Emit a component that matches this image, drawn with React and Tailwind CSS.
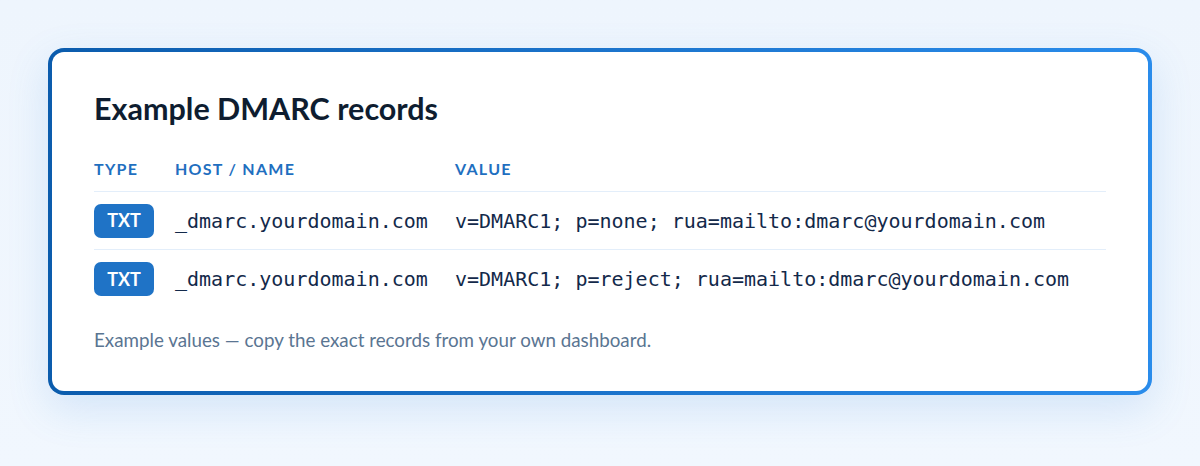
const records = [
  { type: "TXT", host: "_dmarc.yourdomain.com", value: "v=DMARC1; p=none; rua=mailto:dmarc@yourdomain.com" },
  { type: "TXT", host: "_dmarc.yourdomain.com", value: "v=DMARC1; p=reject; rua=mailto:dmarc@yourdomain.com" },
];

export default function App() {
  return (
    <div className="min-h-[466px] w-[1200px] bg-gradient-to-b from-[#eef5fd] to-[#f1f7fe] pt-[48px] px-[48px] font-['Lato','Noto_Sans',sans-serif]">
      {/* card with gradient border */}
      <div className="rounded-[16px] bg-gradient-to-r from-[#0b5cad] to-[#2a8ceb] p-[4px] shadow-[0_14px_40px_rgba(80,150,220,0.18)]">
        <div className="rounded-[12px] bg-white px-[42px] pt-[37px] pb-[38px]">
          <h2 className="text-[30.5px] leading-[38px] font-bold text-[#0e1d30]">Example DMARC records</h2>

          <div className="mt-[30px]">
            <div className="grid grid-cols-[81px_280px_1fr] border-b border-[#e3eefa] pb-[10px] text-[16px] leading-[24px] font-bold tracking-[0.08em] text-[#1f6fc0]">
              <span>TYPE</span>
              <span>HOST / NAME</span>
              <span>VALUE</span>
            </div>
            {records.map((r, i) => (
              <div
                key={i}
                className={`grid grid-cols-[81px_280px_1fr] items-center h-[58px] ${i === 0 ? "border-b border-[#e3eefa]" : ""}`}
              >
                <span className="flex h-[34px] w-[60px] items-center justify-center rounded-[7px] bg-[#1f73c6] text-[18px] font-bold text-white">
                  {r.type}
                </span>
                <span className="font-['DejaVu_Sans_Mono',monospace] text-[20px] text-[#13294a]">{r.host}</span>
                <span className="font-['DejaVu_Sans_Mono',monospace] text-[20px] text-[#13294a]">{r.value}</span>
              </div>
            ))}
          </div>

          <p className="mt-[19px] text-[18.8px] leading-[26px] text-[#5a7592]">
            Example values — copy the exact records from your own dashboard.
          </p>
        </div>
      </div>
    </div>
  );
}
